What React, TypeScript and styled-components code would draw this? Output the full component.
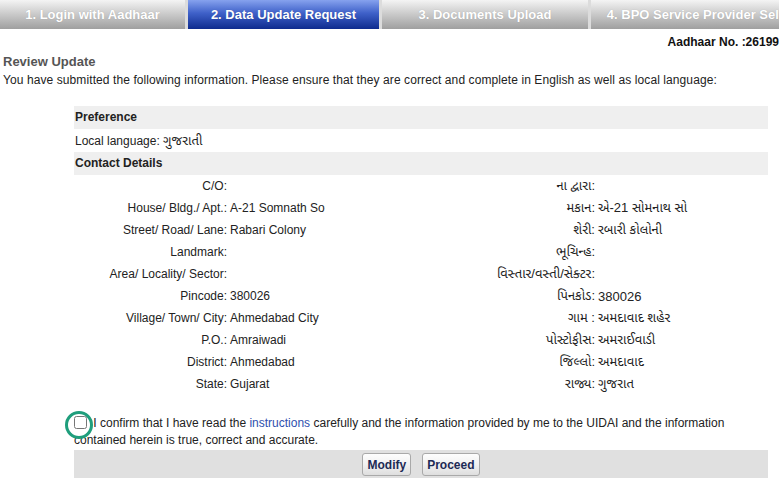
import { FC, Fragment } from 'react';
import styled, { createGlobalStyle } from 'styled-components';

const GlobalStyle = createGlobalStyle`
    html, body {
        margin: 0;
        padding: 0;
        background: #fff;
        overflow: hidden;
    }
    body {
        font-family: 'Liberation Sans', Arial, 'Noto Sans Gujarati', 'Noto Sans', sans-serif;
        font-size: 12px;
        color: #222;
    }
`;

const Page = styled.div`
    width: 779px;
    height: 478px;
    overflow: hidden;
`;

const TabBar = styled.div`
    display: flex;
    gap: 3px;
    height: 29px;
    background: #dcdcdc;
    overflow: hidden;
`;

const Tab = styled.div<{ $active?: boolean; $width: number }>`
    flex: 0 0 ${(props) => props.$width}px;
    display: flex;
    align-items: center;
    justify-content: center;
    white-space: nowrap;
    font-size: 13px;
    font-weight: bold;
    color: #fff;
    text-shadow: 0 0 1px rgba(0, 0, 0, 0.2);
    background: ${(props) =>
        props.$active
            ? 'linear-gradient(to bottom, #86a2ee 0%, #3f61c9 45%, #0e2b8e 100%)'
            : 'linear-gradient(to bottom, #f4f4f4 0%, #cdcdcd 45%, #9f9f9f 100%)'};
`;

const AadhaarLine = styled.div`
    display: flex;
    justify-content: flex-end;
    padding-top: 6px;
    height: 15px;
    font-size: 12px;
    font-weight: bold;
    color: #111;
    white-space: nowrap;
`;

const Content = styled.div`
    padding: 3px 3px 0;
`;

const Title = styled.div`
    font-size: 13px;
    font-weight: bold;
    color: #555;
    line-height: 18px;
`;

const Intro = styled.div`
    line-height: 18px;
    letter-spacing: 0.09px;
`;

const Review = styled.div`
    margin: 17px 0 0 71px;
    width: 694px;
`;

const SectionHead = styled.div`
    height: 23px;
    line-height: 23px;
    padding-left: 1px;
    background: #efefef;
    font-weight: bold;
`;

const PlainRow = styled.div`
    height: 23px;
    line-height: 23px;
    padding-left: 1px;
`;

const Local = styled.span`
    font-size: 13px;
`;

const Grid = styled.div`
    display: grid;
    grid-template-columns: 154px 184px 184px 1fr;
    grid-auto-rows: 22px;
    align-items: center;
    margin-bottom: 13px;
`;

const Label = styled.div<{ $local?: boolean }>`
    text-align: right;
    white-space: nowrap;
    padding-right: 1px;
    font-size: ${(props) => (props.$local ? '13px' : '12px')};
`;

const Value = styled.div<{ $local?: boolean }>`
    white-space: nowrap;
    padding-left: 2px;
    font-size: ${(props) => (props.$local ? '13px' : '12px')};
`;

const Confirm = styled.div`
    position: relative;
    line-height: 17px;
    padding-top: 7px;
`;

const Check = styled.input`
    width: 13px;
    height: 13px;
    margin: 0 3px 0 0;
    vertical-align: -2px;
`;

const Ring = styled.span`
    position: absolute;
    left: -9px;
    top: 3px;
    width: 28px;
    height: 28px;
    box-sizing: border-box;
    border: 3px solid #1f9e7c;
    border-radius: 50%;
    pointer-events: none;
`;

const Link = styled.a`
    color: #2f4fae;
    text-decoration: none;
`;

const ButtonBar = styled.div`
    display: flex;
    justify-content: center;
    gap: 11px;
    margin-top: 1px;
    padding: 3px 0;
    background: #e0e0e0;
`;

const Button = styled.button`
    height: 23px;
    padding: 0 4px;
    font-family: inherit;
    font-size: 12px;
    font-weight: bold;
    color: #1d2a55;
    border: 1px solid #a9a9a9;
    border-radius: 3px;
    background: linear-gradient(to bottom, #fdfdfd 0%, #f1f1f1 50%, #dedede 100%);
`;

type Field = { label: string; value: string; localLabel: string; localValue: string };

const fields: Field[] = [
    { label: 'C/O:', value: '', localLabel: 'ના દ્વારા:', localValue: '' },
    { label: 'House/ Bldg./ Apt.:', value: ' A-21 Somnath So', localLabel: 'મકાન:', localValue: 'એ-21 સોમનાથ સો' },
    { label: 'Street/ Road/ Lane:', value: 'Rabari Colony', localLabel: 'શેરી:', localValue: 'રબારી કોલોની' },
    { label: 'Landmark:', value: '', localLabel: 'ભૂચિન્હ:', localValue: '' },
    { label: 'Area/ Locality/ Sector:', value: '', localLabel: 'વિસ્તાર/વસ્તી/સેક્ટર:', localValue: '' },
    { label: 'Pincode:', value: '380026', localLabel: 'પિનકોડ:', localValue: '380026' },
    { label: 'Village/ Town/ City:', value: 'Ahmedabad City', localLabel: 'ગામ :', localValue: 'અમદાવાદ શહેર' },
    { label: 'P.O.:', value: 'Amraiwadi', localLabel: 'પોસ્ટોફીસ:', localValue: 'અમરાઈવાડી' },
    { label: 'District:', value: 'Ahmedabad', localLabel: 'જિલ્લો:', localValue: 'અમદાવાદ' },
    { label: 'State:', value: 'Gujarat', localLabel: 'રાજ્ય:', localValue: 'ગુજરાત' },
];

const tabs = [
    { label: '1. Login with Aadhaar', width: 185 },
    { label: '2. Data Update Request', width: 191, active: true },
    { label: '3. Documents Upload', width: 206 },
    { label: '4. BPO Service Provider Selection', width: 242 },
];

const App: FC = () => (
    <Page>
        <GlobalStyle />
        <TabBar>
            {tabs.map((tab) => (
                <Tab key={tab.label} $width={tab.width} $active={tab.active}>
                    {tab.label}
                </Tab>
            ))}
        </TabBar>
        <AadhaarLine>Aadhaar No. :26199</AadhaarLine>
        <Content>
            <Title>Review Update</Title>
            <Intro>
                You have submitted the following information. Please ensure that they are correct and complete in
                English as well as local language:
            </Intro>
            <Review>
                <SectionHead>Preference</SectionHead>
                <PlainRow>
                    Local language: <Local>ગુજરાતી</Local>
                </PlainRow>
                <SectionHead>Contact Details</SectionHead>
                <Grid>
                    {fields.map((f) => (
                        <Fragment key={f.label}>
                            <Label>{f.label}</Label>
                            <Value>{f.value}</Value>
                            <Label $local>{f.localLabel}</Label>
                            <Value $local>{f.localValue}</Value>
                        </Fragment>
                    ))}
                </Grid>
                <Confirm>
                    <Ring />
                    <Check type="checkbox" /> I confirm that I have read the <Link href="#">instructions</Link>{' '}
                    carefully and the information provided by me to the UIDAI and the information contained herein is
                    true, correct and accurate.
                </Confirm>
                <ButtonBar>
                    <Button>Modify</Button>
                    <Button>Proceed</Button>
                </ButtonBar>
            </Review>
        </Content>
    </Page>
);

export default App;
